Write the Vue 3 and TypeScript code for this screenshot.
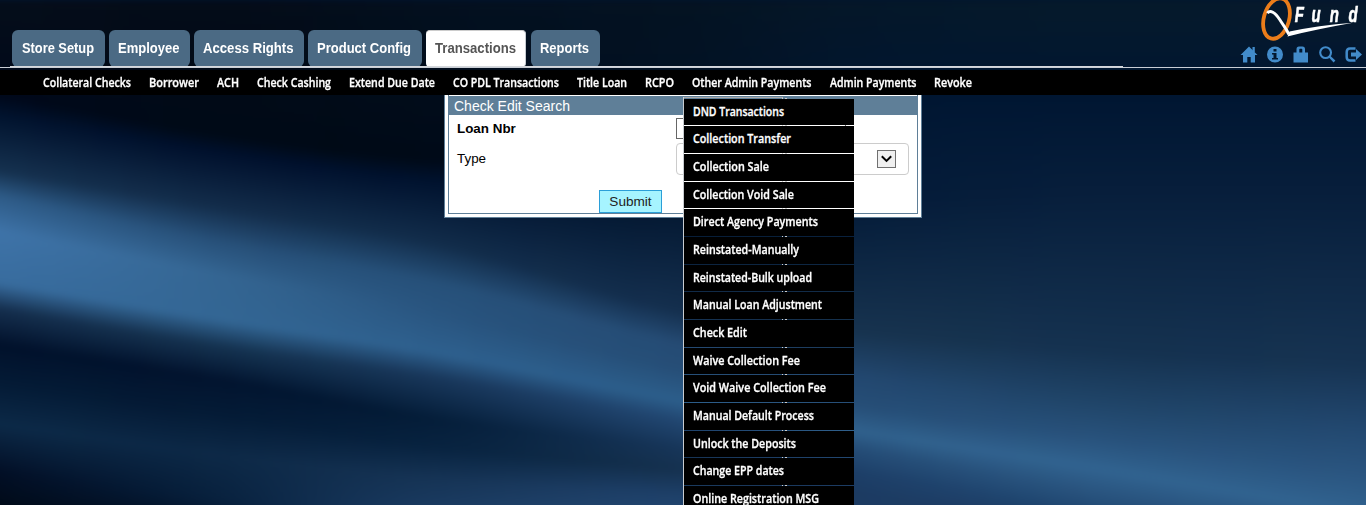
<script setup lang="ts">
import { onMounted, ref } from 'vue'

interface Label {
  text: string
  width: number
}

interface Tab extends Label {
  box: number
  active?: boolean
}

const tabs: Tab[] = [
  { text: 'Store Setup', width: 72, box: 93 },
  { text: 'Employee', width: 61.5, box: 81 },
  { text: 'Access Rights', width: 90.5, box: 110 },
  { text: 'Product Config', width: 94, box: 114 },
  { text: 'Transactions', width: 81, box: 100, active: true },
  { text: 'Reports', width: 49, box: 69 },
]

const navItems: Label[] = [
  { text: 'Collateral Checks', width: 88 },
  { text: 'Borrower', width: 50 },
  { text: 'ACH', width: 22 },
  { text: 'Check Cashing', width: 74 },
  { text: 'Extend Due Date', width: 86 },
  { text: 'CO PDL Transactions', width: 106 },
  { text: 'Title Loan', width: 50 },
  { text: 'RCPO', width: 29 },
  { text: 'Other Admin Payments', width: 119.5 },
  { text: 'Admin Payments', width: 86.5 },
  { text: 'Revoke', width: 38 },
]

const menuItems: (Label & { height: number })[] = [
  { text: 'DND Transactions', width: 91, height: 26 },
  { text: 'Collection Transfer', width: 98, height: 27 },
  { text: 'Collection Sale', width: 76, height: 27 },
  { text: 'Collection Void Sale', width: 101, height: 26 },
  { text: 'Direct Agency Payments', width: 125, height: 27 },
  { text: 'Reinstated-Manually', width: 106, height: 27 },
  { text: 'Reinstated-Bulk upload', width: 119, height: 26 },
  { text: 'Manual Loan Adjustment', width: 129, height: 27 },
  { text: 'Check Edit', width: 54, height: 27 },
  { text: 'Waive Collection Fee', width: 107, height: 26 },
  { text: 'Void Waive Collection Fee', width: 133, height: 27 },
  { text: 'Manual Default Process', width: 121, height: 27 },
  { text: 'Unlock the Deposits', width: 103, height: 26 },
  { text: 'Change EPP dates', width: 91, height: 27 },
  { text: 'Online Registration MSG', width: 126, height: 27 },
]

// Condenses a label horizontally so that it fills the given width.
const vFit = {
  mounted(el: HTMLElement, binding: { value: number }) {
    const natural = el.getBoundingClientRect().width
    el.style.transform = `scaleX(${binding.value / natural})`
    el.style.width = `${natural}px`
    el.style.marginRight = `${binding.value - natural}px`
  },
}

// Folds of the blue backdrop: each row follows one fold across the columns.
const columns = [0, 220, 440, 683, 854, 1110, 1366]
const foldY = [
  [0, 0, 0, 0, 0, 0, 0],
  [95, 135, 160, 160, 100, 95, 95],
  [116, 152, 182, 200, 200, 190, 190],
  [171, 208, 245, 312, 332, 352, 365],
  [196, 242, 284, 345, 375, 405, 430],
  [232, 275, 315, 370, 405, 440, 475],
  [283, 320, 354, 402, 431, 471, 515],
  [309, 346, 378, 420, 449, 495, 535],
  [345, 380, 420, 448, 472, 515, 560],
  [385, 415, 448, 470, 492, 535, 580],
  [425, 455, 480, 496, 515, 550, 600],
  [472, 500, 520, 530, 550, 580, 620],
  [510, 530, 560, 570, 580, 600, 640],
]
const foldColor = [
  ['050e1a', '040c18', '03101f', '041322', '051728', '061a2b', '07192c'],
  ['00081a', '000a17', '000a18', '001026', '001530', '001632', '001632'],
  ['01132e', '00102c', '00122e', '02162f', '041b38', '071e3b', '071e3b'],
  ['15314f', '132d4b', '122d4b', '142f4e', '17334f', '153250', '163352'],
  ['2d5a86', '275079', '265079', '254b74', '22476f', '204569', '224870'],
  ['3e73a8', '346592', '295580', '264e77', '264e77', '28527c', '2a5580'],
  ['386c9e', '336694', '2e608e', '2c5e8b', '30618d', '316390', '316390'],
  ['152f4e', '153351', '19385c', '224873', '254d77', '29547f', '29547f'],
  ['01112b', '02142f', '051e3a', '17365a', '1d3f68', '204872', '204872'],
  ['041b36', '041b36', '082340', '15314f', '1c3b62', '1c3b62', '1c3b62'],
  ['0c2947', '0d2947', '163456', '1e4069', '1c3b62', '1c3b62', '1c3b62'],
  ['020f26', '08213e', '1c3e66', '254b75', '244a74', '244a74', '244a74'],
  ['000a17', '04152c', '1c3e66', '254b75', '244a74', '244a74', '244a74'],
]

function spline(values: number[], x: number): number {
  let i = 0
  while (i < columns.length - 2 && x > columns[i + 1]) i++
  const span = columns[i + 1] - columns[i]
  const t = (x - columns[i]) / span
  const slope = (k: number) => {
    const a = Math.max(0, k - 1)
    const b = Math.min(columns.length - 1, k + 1)
    return ((values[b] - values[a]) / (columns[b] - columns[a])) * span
  }
  const t2 = t * t
  const t3 = t2 * t
  return (
    (2 * t3 - 3 * t2 + 1) * values[i] +
    (t3 - 2 * t2 + t) * slope(i) +
    (3 * t2 - 2 * t3) * values[i + 1] +
    (t3 - t2) * slope(i + 1)
  )
}

const backdrop = ref<HTMLCanvasElement | null>(null)

onMounted(() => {
  const canvas = backdrop.value
  const ctx = canvas?.getContext('2d')
  if (!canvas || !ctx) return
  const channels = foldColor.map((row) =>
    [0, 2, 4].map((at) => row.map((hex) => parseInt(hex.slice(at, at + 2), 16))),
  )
  for (let x = 0; x < canvas.width; x++) {
    const gradient = ctx.createLinearGradient(0, 0, 0, 660)
    foldY.forEach((row, k) => {
      const stop = Math.min(1, Math.max(0, spline(row, x - 20) / 660))
      const rgb = channels[k].map((c) => Math.min(255, Math.max(0, Math.round(spline(c, x - 20)))))
      gradient.addColorStop(stop, `rgb(${rgb.join(',')})`)
    })
    ctx.fillStyle = gradient
    ctx.fillRect(x, 0, 1, canvas.height)
  }
})
</script>

<template>
  <div class="page">
    <canvas ref="backdrop" class="backdrop" width="1406" height="540"></canvas>

    <header class="header">
      <nav class="tabs">
        <a
          v-for="tab in tabs"
          :key="tab.text"
          class="tab"
          :class="{ active: tab.active }"
          :style="{ width: tab.box + 'px' }"
        ><span v-fit="tab.width" class="fit">{{ tab.text }}</span></a>
      </nav>
      <div class="brand">
        <svg class="logo" width="110" height="42" viewBox="0 0 110 42">
          <ellipse cx="20.5" cy="18.6" rx="12.6" ry="20.6" transform="rotate(16 20.5 18.6)" fill="none" stroke="#ec7d1a" stroke-width="3.8" />
          <path d="M11.3 13.2C14 9.5 19 12 24 20C27 25 30.500 29 32.800 34.300" fill="none" stroke="#fff" stroke-width="2.900" />
          <path d="M31.500 36.400L33.500 31.600Q62 25.500 97 22.800Q62 29 31.500 36.400Z" fill="#fff" />
          <g class="logo-text" transform="translate(0 22) scale(.68 1)">
            <text x="57" y="0">F</text>
            <text x="81.500" y="0">u</text>
            <text x="108.500" y="0">n</text>
            <text x="136" y="0">d</text>
          </g>
        </svg>
        <div class="icons">
          <svg width="18" height="17" viewBox="0 0 18 17"><path d="M9 .5L17.500 9H15V16.500H10.700V11H7.300V16.500H3V9H.5L9 .5Z" /><path d="M12.500 1H14.800V6H12.500Z" /></svg>
          <svg width="17" height="17" viewBox="0 0 17 17"><path fill-rule="evenodd" d="M8 .5a8 8 0 1 1 0 16a8 8 0 1 1 0-16ZM6.500 3H9.500V5.500H6.500ZM5 7H9.500V12H11V13.500H5V12H6.500V8.500H5Z" /></svg>
          <svg width="17" height="17" viewBox="0 0 17 17"><path fill-rule="evenodd" d="M3.500 6.500V3.200Q3.500 .5 6 .5H9.500Q12 .5 12 3.200V6.500H15V16.500H.5V6.500ZM6.300 6.500H9.300V3.500Q9.300 2.800 8.600 2.800H7Q6.300 2.800 6.300 3.500Z" /></svg>
          <svg width="17" height="17" viewBox="0 0 17 17"><circle cx="6.600" cy="6.600" r="5.400" fill="none" stroke="#428bca" stroke-width="2.100" /><path d="M9.700 11.200L11.200 9.700L16.400 14.600L14.600 16.500Z" /></svg>
          <svg width="18" height="17" viewBox="0 0 18 17"><path d="M10.500 2.500H5Q1.700 2.500 1.700 6V11Q1.700 14.500 5 14.500H10.500" fill="none" stroke="#428bca" stroke-width="2.500" /><path d="M6 6.500H11V3L17 8.500L11 14V10.500H6Z" /></svg>
        </div>
      </div>
      <div class="rule short"></div>
      <div class="rule"></div>
    </header>

    <nav class="subnav">
      <a v-for="item in navItems" :key="item.text"><span v-fit="item.width" class="fit">{{ item.text }}</span></a>
    </nav>

    <main class="main">
      <section class="panel">
        <div class="panel-inner">
          <h1 class="title">Check Edit Search</h1>
          <div class="row loan">
            <label class="name"><b>Loan Nbr</b></label>
            <span class="input"></span>
          </div>
          <div class="row type">
            <label class="name">Type</label>
            <span class="select">
              <span class="arrow">
                <svg width="11" height="8" viewBox="0 0 11 8"><path d="M.8 1.200L5.500 5.900L10.200 1.200" fill="none" stroke="#000" stroke-width="2" /></svg>
              </span>
            </span>
          </div>
          <div class="actions"><button class="submit" type="button">Submit</button></div>
        </div>
      </section>

      <div class="menu">
        <div class="edge"></div>
        <div
          v-for="item in menuItems"
          :key="item.text"
          class="menu-item"
          :style="{ height: item.height + 'px' }"
        ><span v-fit="item.width" class="fit">{{ item.text }}</span></div>
      </div>
    </main>
  </div>
</template>

<style>
html,
body {
  margin: 0;
  overflow: hidden;
  background: #001530;
}
</style>

<style scoped>
.page {
  position: relative;
  width: 1366px;
  height: 505px;
  overflow: hidden;
  font-family: "Liberation Sans", Arial, sans-serif;
}

.backdrop {
  position: absolute;
  left: -20px;
  top: 0;
  display: block;
  filter: blur(3px);
}

.fit {
  display: inline-block;
  white-space: nowrap;
  transform-origin: 0 50%;
}

.header {
  position: relative;
  height: 70px;
  display: grid;
  grid-template-columns: 1fr 110px;
  grid-template-rows: 66px 1px 1px;
}

.tabs {
  display: flex;
  gap: 4px;
  padding: 30px 0 0 12px;
}

.tab {
  box-sizing: border-box;
  height: 36.500px;
  padding-left: 9px;
  border-radius: 6px;
  background: #4b6a84;
  color: #fff;
  font-weight: bold;
  font-size: 14px;
  line-height: 36px;
  white-space: nowrap;
}

.tab:first-child {
  padding-left: 10px;
}

.tab.active {
  margin-right: 1px;
  border-top: 1px solid #ccc;
  border-right: 1px solid #c6ccd2;
  border-radius: 4px;
  background: #fff;
  color: #555;
  line-height: 34px;
}

.brand {
  height: 66px;
}

.logo {
  display: block;
}

.logo-text {
  font: italic bold 22px "Liberation Sans", Arial, sans-serif;
  fill: #fff;
  stroke: #fff;
  stroke-width: 0.6px;
}

.icons {
  display: flex;
  gap: 9px;
  margin: 4px 0 0 -16px;
}

.icons svg {
  flex: none;
  fill: #428bca;
}

.rule {
  grid-column: 1 / -1;
  height: 1px;
  background: #c9ced6;
}

.rule.short {
  margin-left: 10px;
  width: 1113px;
  background: #d5d8dc;
}

.subnav {
  position: relative;
  box-sizing: border-box;
  display: flex;
  gap: 18px;
  height: 25px;
  padding-left: 43px;
  background: #000;
  color: #fff;
  font: 600 11.700px/24px "Open Sans", "Noto Sans", sans-serif;
  -webkit-text-stroke: 0.3px #fff;
}

.main {
  position: relative;
}

.panel {
  box-sizing: border-box;
  width: 478px;
  height: 123px;
  margin-left: 444px;
  padding: 0 3px 3px;
  border: 1px solid #5f7f98;
  border-top: 0;
  background: #fff;
}

.panel-inner {
  box-sizing: border-box;
  height: 119px;
  border: 1px solid #5f7f98;
  border-top: 0;
  color: #000;
  font-size: 13.400px;
}

.title {
  height: 19px;
  margin: 0;
  border-top: 1px solid #fff;
  padding-left: 5px;
  background: #5f7f98;
  background-clip: padding-box;
  color: #fff;
  font-size: 14px;
  font-weight: normal;
  line-height: 20px;
}

.row {
  display: flex;
  align-items: center;
}

.name {
  width: 219px;
  padding-left: 8px;
}

.loan {
  height: 27px;
}

.type {
  height: 34px;
}

.type .name {
  padding-bottom: 2px;
}

.input {
  box-sizing: border-box;
  width: 170px;
  height: 21px;
  border: 1px solid #666;
}

.select {
  box-sizing: border-box;
  display: flex;
  align-items: center;
  justify-content: flex-end;
  width: 233px;
  height: 32px;
  padding-right: 12px;
  border: 1px solid #ccc;
  border-radius: 4px;
}

.arrow {
  box-sizing: border-box;
  display: grid;
  place-items: center;
  width: 19px;
  height: 18px;
  border: 1px solid #707070;
  background: #f0f0f0;
}

.actions {
  padding: 14px 0 0 150px;
}

.submit {
  display: block;
  box-sizing: border-box;
  width: 63px;
  height: 23px;
  padding: 0;
  border: 1px solid #2b9fd8;
  background: #a6f4ff;
  color: #222;
  font: 13.600px/20px "Liberation Sans", Arial, sans-serif;
}

.menu {
  position: absolute;
  left: 683px;
  top: 2px;
  width: 170px;
  padding-top: 2px;
  border-left: 1px solid #c8ccd0;
  display: flex;
  flex-direction: column;
  gap: 1px;
}

.edge {
  position: absolute;
  left: 0;
  top: 0;
  width: 98px;
  height: 413px;
  border-top: 1px solid #aaa;
  border-right: 1px solid #ccc;
}

.edge::after {
  content: "";
  position: absolute;
  left: 101px;
  top: 0;
  width: 2px;
  height: 413px;
  background: #ccc;
}

.menu-item {
  position: relative;
  box-sizing: border-box;
  flex: none;
  padding-left: 9px;
  background: #000;
  color: #fff;
  font: 600 11.700px/25px "Open Sans", "Noto Sans", sans-serif;
  -webkit-text-stroke: 0.3px #fff;
}
</style>
